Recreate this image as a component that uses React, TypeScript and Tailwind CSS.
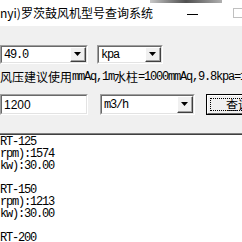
import React from 'react';

const ui = { fontFamily: '"Liberation Mono", "Noto Sans CJK SC", monospace' };
const cjk = { fontFamily: '"Noto Sans CJK SC", sans-serif' };

const Sunken: React.FC<{ className?: string; children?: React.ReactNode }> = ({ className, children }) => (
  <div className={`shrink-0 border-t border-l border-[#a0a0a0] border-b border-r border-b-white border-r-white ${className ?? ''}`}>
    <div className="h-full border-t border-l border-[#696969] border-b border-r border-b-[#e3e3e3] border-r-[#e3e3e3] bg-white flex items-center">
      {children}
    </div>
  </div>
);

const ArrowBtn: React.FC = () => (
  <div className="w-[16px] h-full border-t border-l border-white border-b border-r border-b-[#404040] border-r-[#404040] bg-[#f0f0f0]">
    <div className="h-full border-b border-r border-[#a0a0a0] flex items-center justify-center">
      <svg width="7" height="4" viewBox="0 0 7 4"><path d="M0 0h7L3.5 4z" fill="#000" /></svg>
    </div>
  </div>
);

const Combo: React.FC<{ value: string; className?: string }> = ({ value, className }) => (
  <Sunken className={className}>
    <span className="flex-1 pl-[2px] text-[12px] tracking-[-1.2px] leading-none">{value}</span>
    <ArrowBtn />
  </Sunken>
);

const lines = ['RT-125', 'rpm):1574', 'kw):30.00', '', 'RT-150', 'rpm):1213', 'kw):30.00', '', 'RT-200', 'rpm):584'];

export default function App() {
  return (
    <div className="w-[242px] h-[242px] overflow-hidden bg-[#f0f0f0] text-black flex flex-col" style={ui}>
      <div className="relative h-[26px] bg-white flex items-center shrink-0">
        <div className="absolute top-0 left-[150px] w-[72px] h-[3px] bg-gradient-to-r from-[#c8c8c8] via-[#505050] to-[#b0b0b0]" />
        <span className="text-[12px] leading-none whitespace-nowrap" style={cjk}>nyi)罗茨鼓风机型号查询系统</span>
        <div className="ml-auto flex items-center">
          <div className="w-[11px] h-px bg-black mr-[35px] mt-[2px]" />
          <div className="w-[10px] h-[10px] border border-[#c0c0c0] mr-[-1px]" />
        </div>
      </div>

      <div className="flex mt-[19px] h-[19px] gap-[9px] shrink-0">
        <Combo value="49.0" className="w-[88px]" />
        <Combo value="kpa" className="w-[66px]" />
      </div>

      <div className="mt-[7px] h-[12px] flex items-center whitespace-nowrap text-[12px] tracking-[-1.2px] leading-none shrink-0">
        <span className="tracking-normal" style={cjk}>风压建议使用</span>
        <span>mmAq,1m</span>
        <span className="tracking-normal" style={cjk}>水柱</span>
        <span>=1000mmAq,9.8kpa=1</span>
      </div>

      <div className="flex mt-[11px] h-[21px] shrink-0">
        <Sunken className="w-[88px]">
          <span className="pl-[2px] text-[12px] leading-none" style={{ fontFamily: '"Liberation Sans", sans-serif' }}>1200</span>
        </Sunken>
        <Combo value="m3/h" className="w-[95px] ml-[12px]" />
        <div className="ml-[11px] w-[48px] h-[21px] border border-black bg-[#f0f0f0] shrink-0">
          <div className="h-full border-t border-l border-white border-b border-r border-b-[#696969] border-r-[#696969] p-[2px]">
            <div className="h-full border border-dotted border-black flex items-center pl-[15px] text-[12px] leading-none whitespace-nowrap" style={cjk}>查询</div>
          </div>
        </div>
      </div>

      <div className="mt-[18px] flex-1 border-t border-[#808080] bg-white">
        <div className="h-full border-t border-[#404040] pt-px">
          {lines.map((l, i) => (
            <div key={i} className="h-[12px] text-[12px] tracking-[-1.2px] leading-[12px] whitespace-nowrap">{l}</div>
          ))}
        </div>
      </div>
    </div>
  );
}
